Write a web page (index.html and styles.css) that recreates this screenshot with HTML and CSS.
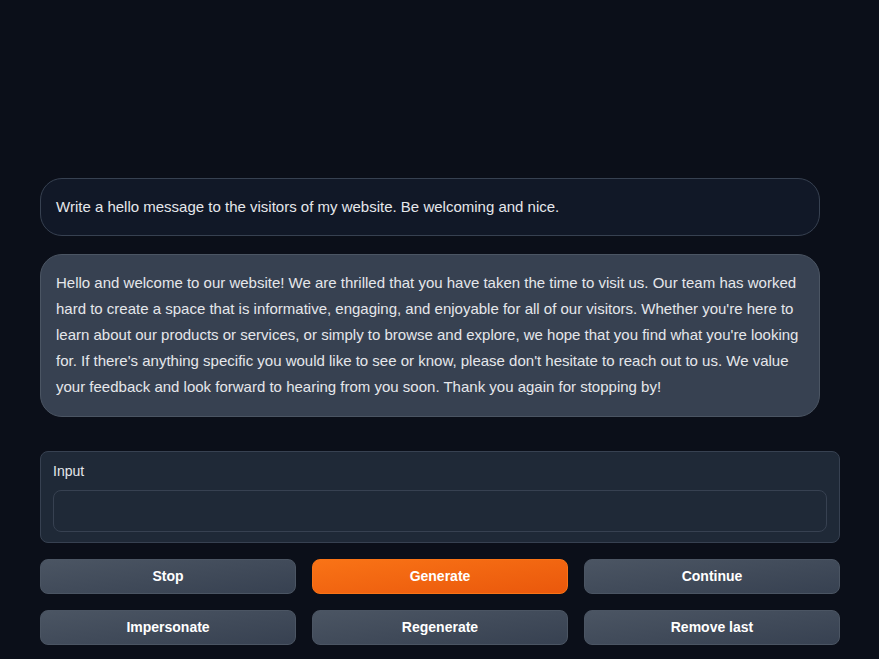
FILE: index.html
```html
<!DOCTYPE html>
<html>
<head>
<meta charset="utf-8">
<link rel="stylesheet" href="styles.css">
</head>
<body>
<main class="app">
  <section class="chat">
    <div class="msg user">Write a hello message to the visitors of my website. Be welcoming and nice.</div>
    <div class="msg bot">Hello and welcome to our website! We are thrilled that you have taken the time to visit us. Our team has worked hard to create a space that is informative, engaging, and enjoyable for all of our visitors. Whether you're here to learn about our products or services, or simply to browse and explore, we hope that you find what you're looking for. If there's anything specific you would like to see or know, please don't hesitate to reach out to us. We value your feedback and look forward to hearing from you soon. Thank you again for stopping by!</div>
  </section>
  <section class="input-block">
    <label class="label" for="inp">Input</label>
    <textarea id="inp" class="textbox"></textarea>
  </section>
  <section class="buttons">
    <button class="btn">Stop</button>
    <button class="btn primary">Generate</button>
    <button class="btn">Continue</button>
    <button class="btn">Impersonate</button>
    <button class="btn">Regenerate</button>
    <button class="btn">Remove last</button>
  </section>
</main>
</body>
</html>
```
FILE: styles.css
```css
html, body {
  margin: 0;
  padding: 0;
  background: #0b0f19;
  height: 100%;
}
body {
  font-family: "Liberation Sans", Arial, sans-serif;
  color: #e5e7eb;
}
.app {
  width: 800px;
  padding: 0 0 0 40px;
  display: flex;
  flex-direction: column;
}
.chat {
  height: 417px;
  padding-right: 20px;
  display: flex;
  flex-direction: column;
  justify-content: flex-end;
  gap: 18px;
}
.msg {
  font-size: 15px;
  line-height: 26px;
  padding: 15px 15px;
  border-radius: 22px;
  border: 1px solid;
}
.user {
  background: #111827;
  border-color: #374151;
}
.bot {
  background: #374151;
  border-color: #4b5563;
  padding-bottom: 16px;
}
.input-block {
  margin-top: 34px;
  background: #1f2937;
  border: 1px solid #374151;
  border-radius: 8px;
  padding: 10px 12px 10px 12px;
  display: flex;
  flex-direction: column;
}
.label {
  font-size: 14px;
  line-height: 18px;
  color: #e5e7eb;
  margin-bottom: 10px;
}
.textbox {
  height: 42px;
  box-sizing: border-box;
  background: #1f2937;
  border: 1px solid #374151;
  border-radius: 8px;
  resize: none;
  outline: none;
  color: #e5e7eb;
}
.buttons {
  margin-top: 16px;
  display: grid;
  grid-template-columns: repeat(3, 1fr);
  column-gap: 16px;
  row-gap: 16px;
}
.btn {
  height: 35px;
  padding: 0 0 2px 0;
  border-radius: 8px;
  border: 1px solid #4b5563;
  background: linear-gradient(to bottom right, #4b5563, #374151);
  color: #ffffff;
  font-family: "Liberation Sans", Arial, sans-serif;
  font-weight: bold;
  font-size: 14px;
}
.btn.primary {
  border-color: #f97316;
  background: linear-gradient(to bottom right, #f97316, #ea580c);
}
```
